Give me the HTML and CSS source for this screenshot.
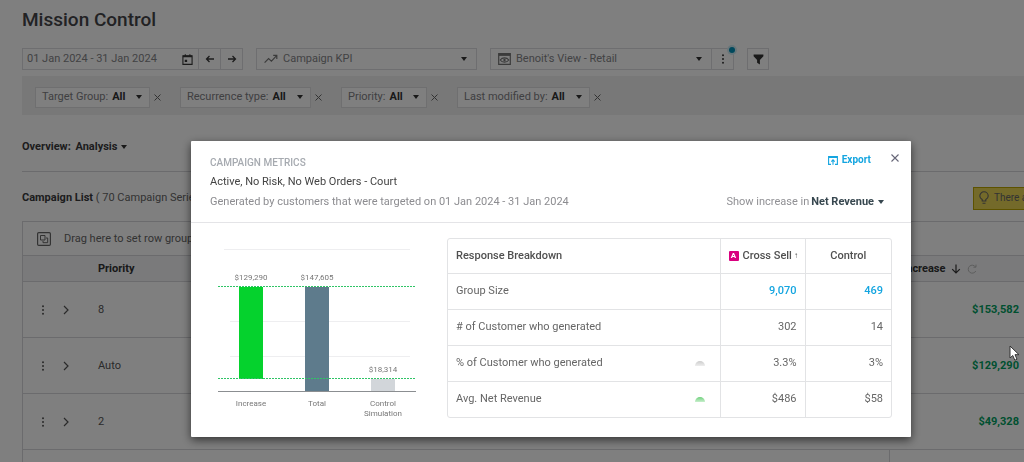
FILE: index.html
```html
<!DOCTYPE html>
<html lang="en">
<head>
<meta charset="utf-8">
<meta name="viewport" content="width=device-width, initial-scale=1">
<title>Mission Control</title>
<link rel="stylesheet" href="styles.css">
</head>
<body>
<main class="page">
  <h1 class="page-title">Mission Control</h1>

  <div class="toolbar">
    <div class="field field-date">
      <input class="date-input" type="text" value="01 Jan 2024 - 31 Jan 2024" aria-label="Date range">
      <button class="icon-btn" aria-label="Open calendar"><svg width="11" height="11" viewBox="0 0 12 12"><path d="M1 2h10v9.3H1z" fill="none" stroke="currentColor" stroke-width="1.2"/><path d="M1 1.6h10v2H1zM3 .4h1.2v2H3zM8 .4h1.2v2H8zM3 6.2h2.6v2.6H3z" fill="currentColor"/></svg></button>
      <button class="icon-btn split" aria-label="Previous period"><svg width="10" height="10" viewBox="0 0 10 10"><path d="M9 5H1.500M4.500 2L1.500 5l3 3" fill="none" stroke="currentColor" stroke-width="1.3"/></svg></button>
      <button class="icon-btn split" aria-label="Next period"><svg width="10" height="10" viewBox="0 0 10 10"><path d="M1 5h7.500M5.500 2L8.500 5l-3 3" fill="none" stroke="currentColor" stroke-width="1.3"/></svg></button>
    </div>
    <button class="field field-kpi">
      <svg class="soft" width="14" height="10" viewBox="0 0 14 10"><path d="M.6 8.600l4-4 2.800 2.600 5-5.400M9.200 1.300h3.600v3.600" fill="none" stroke="currentColor" stroke-width="1.200"/></svg>
      <span class="grow">Campaign KPI</span><span class="caret"></span>
    </button>
    <div class="field field-view">
      <button class="view-btn">
        <svg class="soft" width="13" height="12" viewBox="0 0 13 12"><path d="M.7.7h11.600v10.600H.7z" fill="none" stroke="currentColor" stroke-width="1.200"/><path d="M.7.7h11.600v2.200H.7z" fill="currentColor"/><path d="M2.200 7c2-2.800 6.600-2.800 8.600 0-2 2.800-6.600 2.800-8.600 0z" fill="none" stroke="currentColor" stroke-width="1.100"/><circle cx="6.500" cy="7" r="1.200" fill="currentColor"/></svg>
        <span class="grow">Benoit's View - Retail</span><span class="caret"></span>
      </button>
      <button class="icon-btn split" aria-label="View options"><svg width="4" height="10" viewBox="0 0 4 10" fill="currentColor"><circle cx="2" cy="1.300" r="1"/><circle cx="2" cy="5" r="1"/><circle cx="2" cy="8.700" r="1"/></svg></button>
      <span class="badge"></span>
    </div>
    <button class="field field-filter" aria-label="Filter"><svg width="11" height="11" viewBox="0 0 11 11"><path d="M.6.6h9.800v1.600L6.900 6v4.600L4.100 8.800V6L.6 2.200z" fill="currentColor"/></svg></button>
  </div>

  <div class="filters">
    <div class="filter"><button class="chip chip-group">Target Group: <b>All</b><span class="caret"></span></button><button class="clear" aria-label="Clear target group"><svg width="7" height="7" viewBox="0 0 7 7"><path d="M.5.5l6 6M6.500.5l-6 6" stroke="currentColor"/></svg></button></div>
    <div class="filter"><button class="chip chip-type">Recurrence type: <b>All</b><span class="caret"></span></button><button class="clear" aria-label="Clear recurrence type"><svg width="7" height="7" viewBox="0 0 7 7"><path d="M.5.5l6 6M6.500.5l-6 6" stroke="currentColor"/></svg></button></div>
    <div class="filter"><button class="chip chip-priority">Priority: <b>All</b><span class="caret"></span></button><button class="clear" aria-label="Clear priority"><svg width="7" height="7" viewBox="0 0 7 7"><path d="M.5.5l6 6M6.500.5l-6 6" stroke="currentColor"/></svg></button></div>
    <div class="filter"><button class="chip chip-modified">Last modified by: <b>All</b><span class="caret"></span></button><button class="clear" aria-label="Clear last modified by"><svg width="7" height="7" viewBox="0 0 7 7"><path d="M.5.5l6 6M6.500.5l-6 6" stroke="currentColor"/></svg></button></div>
  </div>

  <div class="overview">Overview: <button class="overview-btn">Analysis <span class="caret"></span></button></div>

  <div class="list-head">
    <h2 class="list-title"><b>Campaign List</b> ( 70 Campaign Series )</h2>
    <div class="notice"><svg width="10" height="14" viewBox="0 0 10 14"><path d="M3.200 10V8.600C1.600 7.700.8 6.500.8 5a4.200 4.200 0 0 1 8.400 0c0 1.500-.8 2.700-2.400 3.600V10zM3.500 12.300h3" fill="none" stroke="currentColor" stroke-width="1.100"/></svg><span>There a</span></div>
  </div>

  <section class="list">
    <div class="drag"><svg width="14" height="14" viewBox="0 0 14 14" fill="none" stroke="currentColor"><rect x=".6" y=".6" width="12.800" height="12.800" rx="1.200" stroke-width="1.200"/><path d="M3.500 3.500h4.500v4.500H3.500zM9 6h1.700v4.700H6V9"/></svg>Drag here to set row groups</div>
    <table class="campaigns">
      <colgroup><col class="col-tools"><col><col class="col-increase"></colgroup>
      <thead><tr><td></td><th>Priority</th><th class="sorted"><span class="sort">Increase <svg width="10" height="10" viewBox="0 0 10 10"><path d="M5 .5v8.500M1.200 5.200L5 9l3.800-3.800" fill="none" stroke="currentColor" stroke-width="1.200"/></svg><svg class="refresh" width="10" height="10" viewBox="0 0 10 10"><path d="M8.600 3A4 4 0 1 0 8.800 7M9 .6V3.200H6.400" fill="none" stroke="currentColor"/></svg></span></th></tr></thead>
      <tbody>
        <tr><td><span class="tools"><svg width="4" height="10" viewBox="0 0 4 10" fill="currentColor"><circle cx="2" cy="1.300" r="1"/><circle cx="2" cy="5" r="1"/><circle cx="2" cy="8.700" r="1"/></svg><svg width="6" height="10" viewBox="0 0 6 10"><path d="M1 1l4 4-4 4" fill="none" stroke="currentColor" stroke-width="1.200"/></svg></span></td><td>8</td><td class="gain">$153,582</td></tr>
        <tr><td><span class="tools"><svg width="4" height="10" viewBox="0 0 4 10" fill="currentColor"><circle cx="2" cy="1.300" r="1"/><circle cx="2" cy="5" r="1"/><circle cx="2" cy="8.700" r="1"/></svg><svg width="6" height="10" viewBox="0 0 6 10"><path d="M1 1l4 4-4 4" fill="none" stroke="currentColor" stroke-width="1.200"/></svg></span></td><td>Auto</td><td class="gain">$129,290</td></tr>
        <tr><td><span class="tools"><svg width="4" height="10" viewBox="0 0 4 10" fill="currentColor"><circle cx="2" cy="1.300" r="1"/><circle cx="2" cy="5" r="1"/><circle cx="2" cy="8.700" r="1"/></svg><svg width="6" height="10" viewBox="0 0 6 10"><path d="M1 1l4 4-4 4" fill="none" stroke="currentColor" stroke-width="1.200"/></svg></span></td><td>2</td><td class="gain">$49,328</td></tr>
      </tbody>
      <tfoot><tr><td></td><td></td><td class="edge"></td></tr></tfoot>
    </table>
  </section>
</main>

<div class="backdrop">
  <section class="modal" role="dialog" aria-modal="true" aria-labelledby="modal-name">
    <header class="modal-head">
      <div class="modal-titles">
        <div class="eyebrow">CAMPAIGN METRICS</div>
        <h2 class="modal-name" id="modal-name">Active, No Risk, No Web Orders - Court</h2>
        <p class="modal-note">Generated by customers that were targeted on 01 Jan 2024 - 31 Jan 2024</p>
      </div>
      <div class="modal-side">
        <div class="actions">
          <button class="export"><svg width="10" height="9" viewBox="0 0 10 9"><path d="M3 8.400H.6V.6h8.800v7.800H7M.6 1.400h8.800M5 8.800V4.200M3.300 5.600L5 3.900l1.700 1.700" fill="none" stroke="currentColor" stroke-width="1.100"/></svg>Export</button>
          <button class="close" aria-label="Close"><svg width="8" height="8" viewBox="0 0 8 8"><path d="M.5.5l7 7M7.500.5l-7 7" stroke="currentColor" stroke-width="1.100"/></svg></button>
        </div>
        <button class="metric">Show increase in <b>Net Revenue</b><span class="caret"></span></button>
      </div>
    </header>
    <div class="modal-body">
      <svg class="chart" width="198" height="190" viewBox="0 0 198 190" role="img" aria-label="Increase, total and control simulation">
        <g class="grid-lines"><path d="M6 11.500h186M12 83.500h180M12 118.500h180"/></g>
        <rect class="bar-increase" x="21" y="49" width="24" height="92"/>
        <rect class="bar-total" x="87" y="49" width="24" height="105"/>
        <rect class="bar-control" x="153" y="141" width="24" height="13"/>
        <path class="guide" d="M0 48.500h198M0 140.500h198"/>
        <path class="axis" d="M0 153.500h198"/>
        <g class="values"><text x="33" y="42">$129,290</text><text x="99" y="42">$147,605</text><text x="165" y="134">$18,314</text></g>
        <g class="names"><text x="33" y="168">Increase</text><text x="99" y="168">Total</text><text x="165" y="168">Control</text><text x="165" y="178">Simulation</text></g>
      </svg>
      <div class="breakdown-box">
        <table class="breakdown">
          <colgroup><col><col class="col-test"><col class="col-control"></colgroup>
          <thead><tr><th class="lead">Response Breakdown</th><th class="test"><span class="test-name"><span class="tag">A</span>Cross Sell <small>↑</small></span></th><th>Control</th></tr></thead>
          <tbody>
            <tr><td>Group Size</td><td><a href="#">9,070</a></td><td><a href="#">469</a></td></tr>
            <tr><td># of Customer who generated</td><td>302</td><td>14</td></tr>
            <tr><td><span class="with-mark">% of Customer who generated<span class="mark"></span></span></td><td>3.3%</td><td>3%</td></tr>
            <tr><td><span class="with-mark">Avg. Net Revenue<span class="mark mark-up"></span></span></td><td>$486</td><td>$58</td></tr>
          </tbody>
        </table>
      </div>
    </div>
  </section>
</div>
<svg class="pointer" width="12" height="17" viewBox="0 0 12 17"><path d="M1 1v12l2.800-2.500 2 4.700 2.200-1-2-4.500h4z" fill="#fff" stroke="#333"/></svg>
</body>
</html>
```
FILE: styles.css
```css
* { box-sizing: border-box; }
body {
  margin: 0;
  height: 100vh;
  overflow: hidden;
  background: #fff;
  color: #666;
  font: 11px/16px Roboto, "Liberation Sans", sans-serif;
}
button, input { font: inherit; color: inherit; background: none; border: 0; padding: 0; margin: 0; }
h1, h2, p { margin: 0; font-size: inherit; font-weight: inherit; }
b { font-weight: 700; }
svg { flex: none; display: block; }
.grow { flex: 1; text-align: left; }
.soft { color: #777; }
.caret {
  flex: none;
  display: inline-block;
  border: 3px solid transparent;
  border-top: 4px solid #333;
  border-bottom: 0;
}

.page { padding-left: 22px; overflow: hidden; height: 100vh; }
.page-title { padding: 8px 0 16px; font-size: 19px; line-height: 24px; font-weight: 500; color: #454549; }

.toolbar { display: flex; gap: 13px; height: 22px; color: #858588; }
.field { display: flex; align-items: center; border: 1px solid #dcdce0; }
.field-date { width: 221px; }
.field-kpi { width: 221px; padding: 0 9px 0 7px; gap: 5px; }
.field-view { width: 244px; position: relative; }
.field-filter { width: 22px; justify-content: center; color: #333; }
.date-input { flex: 1; min-width: 0; padding-left: 4px; }
.icon-btn { width: 22px; height: 20px; display: flex; align-items: center; justify-content: center; color: #383838; }
.split { border-left: 1px solid #dcdce0; }
.view-btn { flex: 1; display: flex; align-items: center; gap: 5px; padding: 0 9px 0 7px; }
.badge { position: absolute; right: -2px; top: -2px; width: 6px; height: 6px; border-radius: 50%; background: #0090b8; box-shadow: 0 0 0 2px #d2edf5; }

.filters { display: flex; gap: 19px; margin-top: 6px; padding: 11px 13px 7px; background: #f1f1f1; }
.filter { display: flex; align-items: center; gap: 4px; }
.chip { height: 21px; display: flex; align-items: center; gap: 4px; padding: 0 7px 2px 6px; background: #fff; border: 1px solid #dedee0; color: #808083; white-space: nowrap; }
.chip b { color: #333; }
.chip .caret { margin-left: auto; }
.chip-group { width: 115px; }
.chip-type { width: 131px; }
.chip-priority { width: 86px; }
.chip-modified { width: 133px; }
.clear { color: #666; }

.overview { margin-top: 24px; padding-bottom: 16px; border-bottom: 1px solid #d6d6da; font-weight: 700; color: #3a3a3c; }
.overview-btn { display: inline-flex; align-items: center; gap: 4px; margin-left: 2px; font-weight: 700; }
.list-head { display: flex; justify-content: space-between; align-items: center; height: 49px; padding-top: 3px; }
.list-title b { color: #3a3a3c; }
.notice { width: 51px; height: 23px; display: flex; align-items: center; gap: 5px; padding-left: 5px; white-space: nowrap; background: #e8d455; border: 1px solid #bba500; border-right: 0; color: #666; font-size: 10px; }

.list { border: 1px solid #d6d6da; border-right: 0; border-bottom: 0; }
.drag { display: flex; align-items: center; gap: 13px; height: 33px; padding-left: 14px; }
.campaigns { width: 100%; table-layout: fixed; border-collapse: collapse; }
.col-tools { width: 75px; }
.col-increase { width: 135px; }
.campaigns td, .campaigns th { padding: 0 5px 0 0; text-align: left; border-top: 1px solid #d6d6da; }
.campaigns thead { background: #f4f5f7; color: #333; }
.campaigns th { height: 26px; font-weight: 700; }
.campaigns tbody td { height: 56px; color: #555; }
.sort { display: flex; align-items: center; gap: 6px; padding-left: 14px; }
.refresh { color: #bbb; }
.tools { display: flex; align-items: center; gap: 18px; padding-left: 18px; }
.campaigns tbody .gain { text-align: right; font-weight: 700; color: #00a060; }
.campaigns tfoot td { height: 12px; }
.campaigns .edge { border-left: 1px solid #d6d6da; }

.backdrop { position: fixed; inset: 0; display: flex; align-items: flex-start; padding: 141px 113px 25px 191px; background: rgba(0, 0, 0, 0.5); }
.modal { flex: 1; min-width: 0; background: #fff; border-radius: 1px; box-shadow: 0 3px 10px rgba(0, 0, 0, 0.6); }
.modal-head { display: flex; justify-content: space-between; padding: 11px 12px 11px 19px; border-bottom: 1px solid #e4e4e7; }
.eyebrow { padding-top: 2px; line-height: 18px; font-size: 10px; font-weight: 500; color: #a6aab0; }
.modal-name { line-height: 20px; color: #444; }
.modal-note { line-height: 19px; color: #8c8c90; }
.modal-side { display: flex; flex-direction: column; justify-content: space-between; align-items: flex-end; }
.actions { display: flex; gap: 20px; }
.export { display: flex; align-items: center; gap: 4px; color: #14a5e0; font-weight: 700; font-size: 10px; }
.close { color: #667; padding-bottom: 4px; }
.metric { display: flex; align-items: center; gap: 2px; margin-right: 15px; color: #909094; line-height: 19px; }
.metric b { color: #37474f; }
.metric .caret { margin-left: 2px; border-top-color: #37474f; }

.modal-body { display: grid; grid-template-columns: 198px 1fr; gap: 31px; padding: 15px 19px 9px 27px; }
.grid-lines { stroke: #eeeef0; fill: none; }
.bar-increase { fill: #05d22d; }
.bar-total { fill: #5e7b8c; }
.bar-control { fill: #d2d6da; }
.guide { stroke: #2fc466; stroke-dasharray: 2 1; }
.axis { stroke: #8b8e91; }
.values, .names { text-anchor: middle; font-size: 8px; fill: #777; }

.breakdown-box { align-self: start; border: 1px solid #e2e3e5; border-radius: 3px; }
.breakdown { width: 100%; table-layout: fixed; border-collapse: collapse; }
.col-test { width: 85px; }
.col-control { width: 86px; }
.breakdown th, .breakdown td { height: 36px; padding: 0 8px; text-align: right; border-left: 1px solid #e2e3e5; border-top: 1px solid #e2e3e5; }
.breakdown tr > :first-child { border-left: 0; text-align: left; }
.breakdown thead th { height: 34px; border-top: 0; text-align: center; font-weight: 500; color: #505050; }
.breakdown a { color: #14a5e0; text-decoration: none; font-weight: 500; }
.test-name { display: flex; align-items: center; gap: 4px; white-space: nowrap; }
.test-name small { margin-left: -2px; font-size: 8px; }
.tag { flex: none; width: 10px; height: 10px; border-radius: 1px; background: #d9007f; color: #fff; font-size: 8px; line-height: 10px; font-weight: 700; text-align: center; }
.with-mark { display: flex; justify-content: space-between; align-items: center; padding-right: 7px; }
.mark { width: 10px; height: 5px; border-radius: 5px 5px 0 0; background: linear-gradient(#ccc, #eee); }
.mark-up { background: linear-gradient(#6fd07c, #c8efcd); }
.pointer { position: fixed; left: 1009px; top: 345px; pointer-events: none; }
```
